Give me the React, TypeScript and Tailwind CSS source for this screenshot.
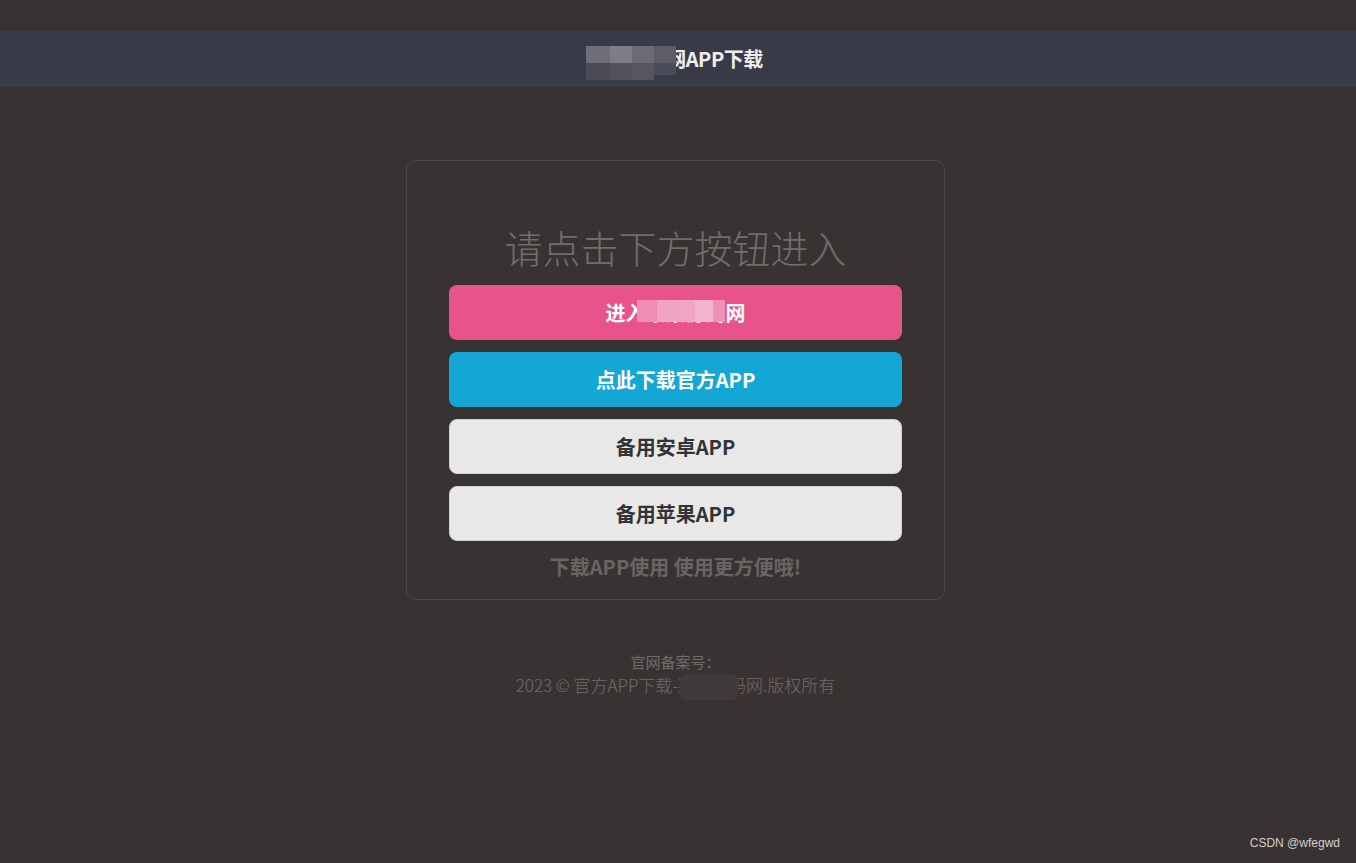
export default function App() {
    const font = { fontFamily: '"Noto Sans CJK SC", "Noto Sans", sans-serif' };

    return (
        <div className="min-h-[863px] bg-[#383332] pt-[31px] relative" style={font}>
            {/* top bar */}
            <div className="h-[56px] bg-[#393a48]">
                <div className="w-[1351px] h-full flex items-center justify-center relative">
                    <span className="text-[20px] font-bold text-[#eeeeee] tracking-tight">某某源码网APP下载</span>
                    <div className="absolute left-[586px] top-[15px] flex">
                        <div className="w-[24px] h-[17px] bg-[#6e6f78]" />
                        <div className="w-[22px] h-[17px] bg-[#7c7d85]" />
                        <div className="w-[22px] h-[17px] bg-[#6a6b74]" />
                        <div className="w-[22px] h-[17px] bg-[#5c5d68]" />
                    </div>
                    <div className="absolute left-[586px] top-[32px] flex">
                        <div className="w-[24px] h-[17px] bg-[#4a4b57]" />
                        <div className="w-[22px] h-[17px] bg-[#50515c]" />
                        <div className="w-[22px] h-[17px] bg-[#555661]" />
                        <div className="w-[22px] h-[12px] bg-[#4b4c58]" />
                    </div>
                </div>
            </div>

            <div className="w-[1351px]">
                {/* card */}
                <div className="w-[539px] mx-auto mt-[73px] border border-[#4e4947] rounded-[10px] pt-[63px] pb-[20px] px-[42px]">
                    <h1 className="text-center text-[38px] leading-[46px] font-light text-[#716d6b] mb-[15px]">
                        请点击下方按钮进入
                    </h1>
                    <div className="flex flex-col gap-[12px]">
                        <div className="relative h-[55px] rounded-[8px] bg-[#e8538a] flex items-center justify-center">
                            <span className="text-[20px] font-bold text-white">进入某某源码网</span>
                            <div className="absolute left-[188px] top-[15px] flex">
                                <div className="w-[20px] h-[22px] bg-[#ef8db2]" />
                                <div className="w-[18px] h-[22px] bg-[#f2a3c1]" />
                                <div className="w-[20px] h-[22px] bg-[#eea6c4]" />
                                <div className="w-[18px] h-[22px] bg-[#f3b5cd]" />
                                <div className="w-[12px] h-[22px] bg-[#ee93b6]" />
                            </div>
                        </div>
                        <div className="h-[55px] rounded-[8px] bg-[#14a7d6] flex items-center justify-center">
                            <span className="text-[20px] font-bold text-white">点此下载官方APP</span>
                        </div>
                        <div className="h-[55px] rounded-[8px] bg-[#e8e8e8] border border-[#d0d0d0] flex items-center justify-center">
                            <span className="text-[20px] font-bold text-[#333333]">备用安卓APP</span>
                        </div>
                        <div className="h-[55px] rounded-[8px] bg-[#e8e8e8] border border-[#d0d0d0] flex items-center justify-center">
                            <span className="text-[20px] font-bold text-[#333333]">备用苹果APP</span>
                        </div>
                    </div>
                    <p className="mt-[14px] text-center text-[20px] leading-[24px] font-bold text-[#6a6563]">
                        下载APP使用 使用更方便哦!
                    </p>
                </div>

                {/* footer */}
                <div className="mt-[51px] text-center text-[#716c6a]">
                    <p className="text-[15px] leading-[22px]">官网备案号：</p>
                    <p className="relative text-[17px] leading-[24px] font-light">
                        2023 © 官方APP下载-某某源码网.版权所有
                        <span className="absolute left-[680px] top-[1px] w-[58px] h-[26px] rounded-[6px] bg-[#403b3a]" />
                    </p>
                </div>
            </div>

            <div
                className="absolute right-[16px] bottom-[11px] text-[12px] text-[#d0d0d0]"
                style={{ fontFamily: '"Liberation Sans", sans-serif' }}
            >
                CSDN @wfegwd
            </div>
        </div>
    );
}
